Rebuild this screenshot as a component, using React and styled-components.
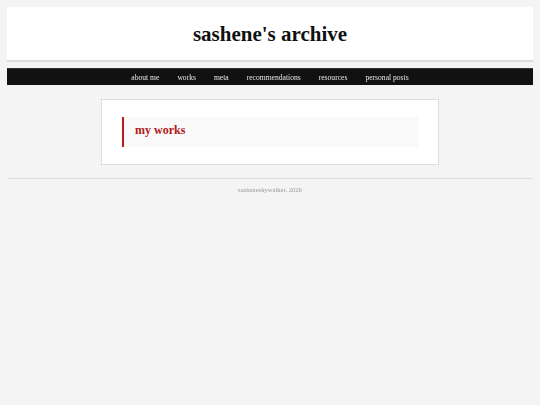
import React from "react";
import styled, { createGlobalStyle } from "styled-components";

const GlobalStyle = createGlobalStyle`
  html, body {
    margin: 0;
    padding: 0;
    background: #f4f4f4;
  }
  body {
    font-family: "Liberation Serif", "DejaVu Serif", serif;
  }
`;

const Page = styled.div`
  padding: 7px 7px 0;
`;

const Header = styled.header`
  height: 53px;
  background: #fff;
  border-bottom: 2px solid #dcdcdc;
  display: flex;
  align-items: center;
  justify-content: center;
`;

const Title = styled.h1`
  margin: 0;
  font-size: 21px;
  font-weight: bold;
  color: #111;
  padding-top: 1px;
`;

const Nav = styled.nav`
  margin-top: 6px;
  height: 16px;
  background: #111;
  border-top: 1px solid #333;
  display: flex;
  justify-content: center;
  align-items: center;
  gap: 18px;
  will-change: transform;
`;

const NavLink = styled.a`
  color: #e6e6e6;
  font-size: 7.6px;
  text-decoration: none;
  cursor: pointer;
`;

const Main = styled.main`
  display: flex;
  justify-content: center;
  padding-top: 14px;
`;

const Card = styled.section`
  width: 338px;
  box-sizing: border-box;
  background: #fff;
  border: 1px solid #ddd;
  padding: 17px 20px 17px;
`;

const Quote = styled.div`
  height: 30px;
  box-sizing: border-box;
  padding: 0 0 3px 11px;
  background: #f9f9f9;
  border-left: 2px solid #b71c1c;
  display: flex;
  align-items: center;
`;

const Heading = styled.h2`
  margin: 0;
  font-size: 12px;
  font-weight: bold;
  color: #b01818;
`;

const Footer = styled.footer`
  margin-top: 13px;
  border-top: 1px solid #ddd;
  padding-top: 7px;
  text-align: center;
  font-size: 6.6px;
  color: #999;
  will-change: transform;
`;

const links = [
  "about me",
  "works",
  "meta",
  "recommendations",
  "resources",
  "personal posts",
];

const App = () => {
  return (
    <>
      <GlobalStyle />
      <Page>
        <Header>
          <Title>sashene's archive</Title>
        </Header>
        <Nav>
          {links.map((l) => (
            <NavLink key={l}>{l}</NavLink>
          ))}
        </Nav>
        <Main>
          <Card>
            <Quote>
              <Heading>my works</Heading>
            </Quote>
          </Card>
        </Main>
        <Footer>sasheneskywalker, 2026</Footer>
      </Page>
    </>
  );
};

export default App;
